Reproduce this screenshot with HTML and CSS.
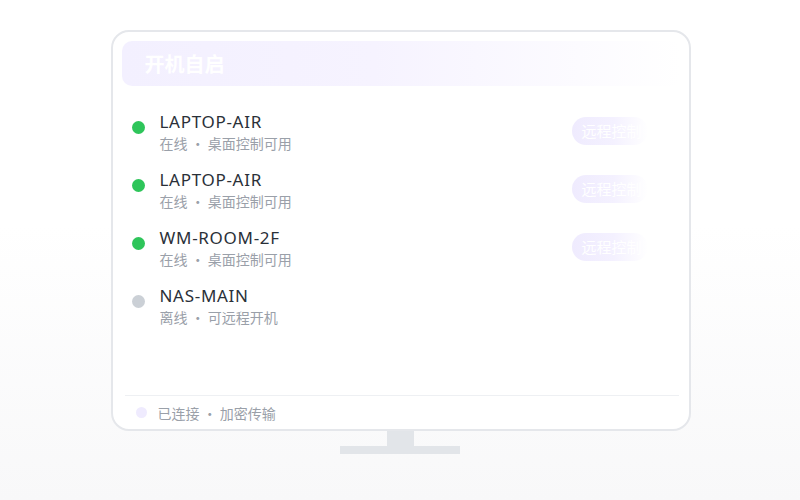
FILE: index.html
```html
<!DOCTYPE html>
<html lang="zh">
<head>
<meta charset="utf-8">
<title>开机自启</title>
<link rel="stylesheet" href="styles.css">
</head>
<body>
<div class="stage">
  <div class="monitor">
    <div class="screen">
      <div class="header"><span class="title">开机自启</span></div>
      <div class="list">
        <div class="row">
          <span class="dot on"></span>
          <div class="info"><div class="name">LAPTOP-AIR</div><div class="sub">在线 · 桌面控制可用</div></div>
          <span class="btn">远程控制</span>
        </div>
        <div class="row">
          <span class="dot on"></span>
          <div class="info"><div class="name">LAPTOP-AIR</div><div class="sub">在线 · 桌面控制可用</div></div>
          <span class="btn">远程控制</span>
        </div>
        <div class="row">
          <span class="dot on"></span>
          <div class="info"><div class="name">WM-ROOM-2F</div><div class="sub">在线 · 桌面控制可用</div></div>
          <span class="btn">远程控制</span>
        </div>
        <div class="row">
          <span class="dot off"></span>
          <div class="info"><div class="name">NAS-MAIN</div><div class="sub">离线 · 可远程开机</div></div>
        </div>
      </div>
      <div class="footer">
        <span class="fdot"></span>
        <span class="ftext">已连接 · 加密传输</span>
      </div>
    </div>
  </div>
  <div class="neck"></div>
  <div class="base"></div>
</div>
</body>
</html>
```
FILE: styles.css
```css
html, body {
  margin: 0;
  padding: 0;
  height: 100%;
  font-family: "Noto Sans", "Noto Sans CJK SC", sans-serif;
}
body {
  background: linear-gradient(180deg, #ffffff 0%, #ffffff 45%, #f8f8f9 100%);
}
.stage {
  display: flex;
  flex-direction: column;
  align-items: center;
  padding-top: 30px;
}
.monitor {
  width: 580px;
  height: 401px;
  box-sizing: border-box;
  border: 2px solid #e5e7eb;
  border-radius: 18px;
  background: #ffffff;
  margin-left: 1px;
}
.screen {
  height: 100%;
  display: flex;
  flex-direction: column;
  padding: 9px 8px 0 9px;
  box-sizing: border-box;
}
.header {
  height: 45px;
  border-radius: 10px;
  background: linear-gradient(90deg, #f3f0ff 0%, #f6f3ff 45%, #ffffff 100%);
  display: flex;
  align-items: center;
  padding-left: 23px;
}
.title {
  color: #ffffff;
  font-size: 20px;
  font-weight: 700;
  font-family: "Noto Sans CJK SC", sans-serif;
}
.list {
  flex: 1;
  display: flex;
  flex-direction: column;
  padding-top: 17px;
}
.row {
  height: 58px;
  display: flex;
  align-items: flex-start;
  padding: 8px 0 0 10px;
  box-sizing: border-box;
}
.dot {
  width: 13px;
  height: 13px;
  border-radius: 50%;
  margin-top: 10px;
  flex: none;
}
.dot.on { background: #2ec55a; }
.dot.off { background: #cbd0d6; }
.info {
  margin-left: 15px;
  flex: 1;
}
.name {
  font-size: 17px;
  line-height: 22px;
  color: #2a3038;
  letter-spacing: 0.7px;
}
.sub {
  font-size: 14px;
  line-height: 20px;
  color: #9aa0a9;
  font-family: "Noto Sans CJK SC", sans-serif;
}
.btn {
  width: 76px;
  height: 28px;
  border-radius: 14px;
  margin-top: 6px;
  margin-right: 33px;
  background: linear-gradient(90deg, #efebfe 0%, #f4f1ff 55%, rgba(255,255,255,0) 100%);
  color: #ffffff;
  font-size: 15px;
  line-height: 28px;
  padding-left: 10px;
  box-sizing: border-box;
  white-space: nowrap;
  overflow: hidden;
  font-family: "Noto Sans CJK SC", sans-serif;
}
.footer {
  height: 33px;
  margin: 0 2px 0 3px;
  border-top: 1px solid #eef0f3;
  display: flex;
  align-items: center;
  padding-left: 11px;
}
.fdot {
  width: 11px;
  height: 11px;
  border-radius: 50%;
  background: #efebfe;
}
.ftext {
  margin-left: 11px;
  font-size: 14px;
  color: #9aa0a9;
  font-family: "Noto Sans CJK SC", sans-serif;
}
.neck {
  width: 27px;
  height: 15px;
  background: #e2e5e9;
  margin-left: 1px;
}
.base {
  width: 120px;
  height: 8px;
  background: #e2e5e9;
}
```
